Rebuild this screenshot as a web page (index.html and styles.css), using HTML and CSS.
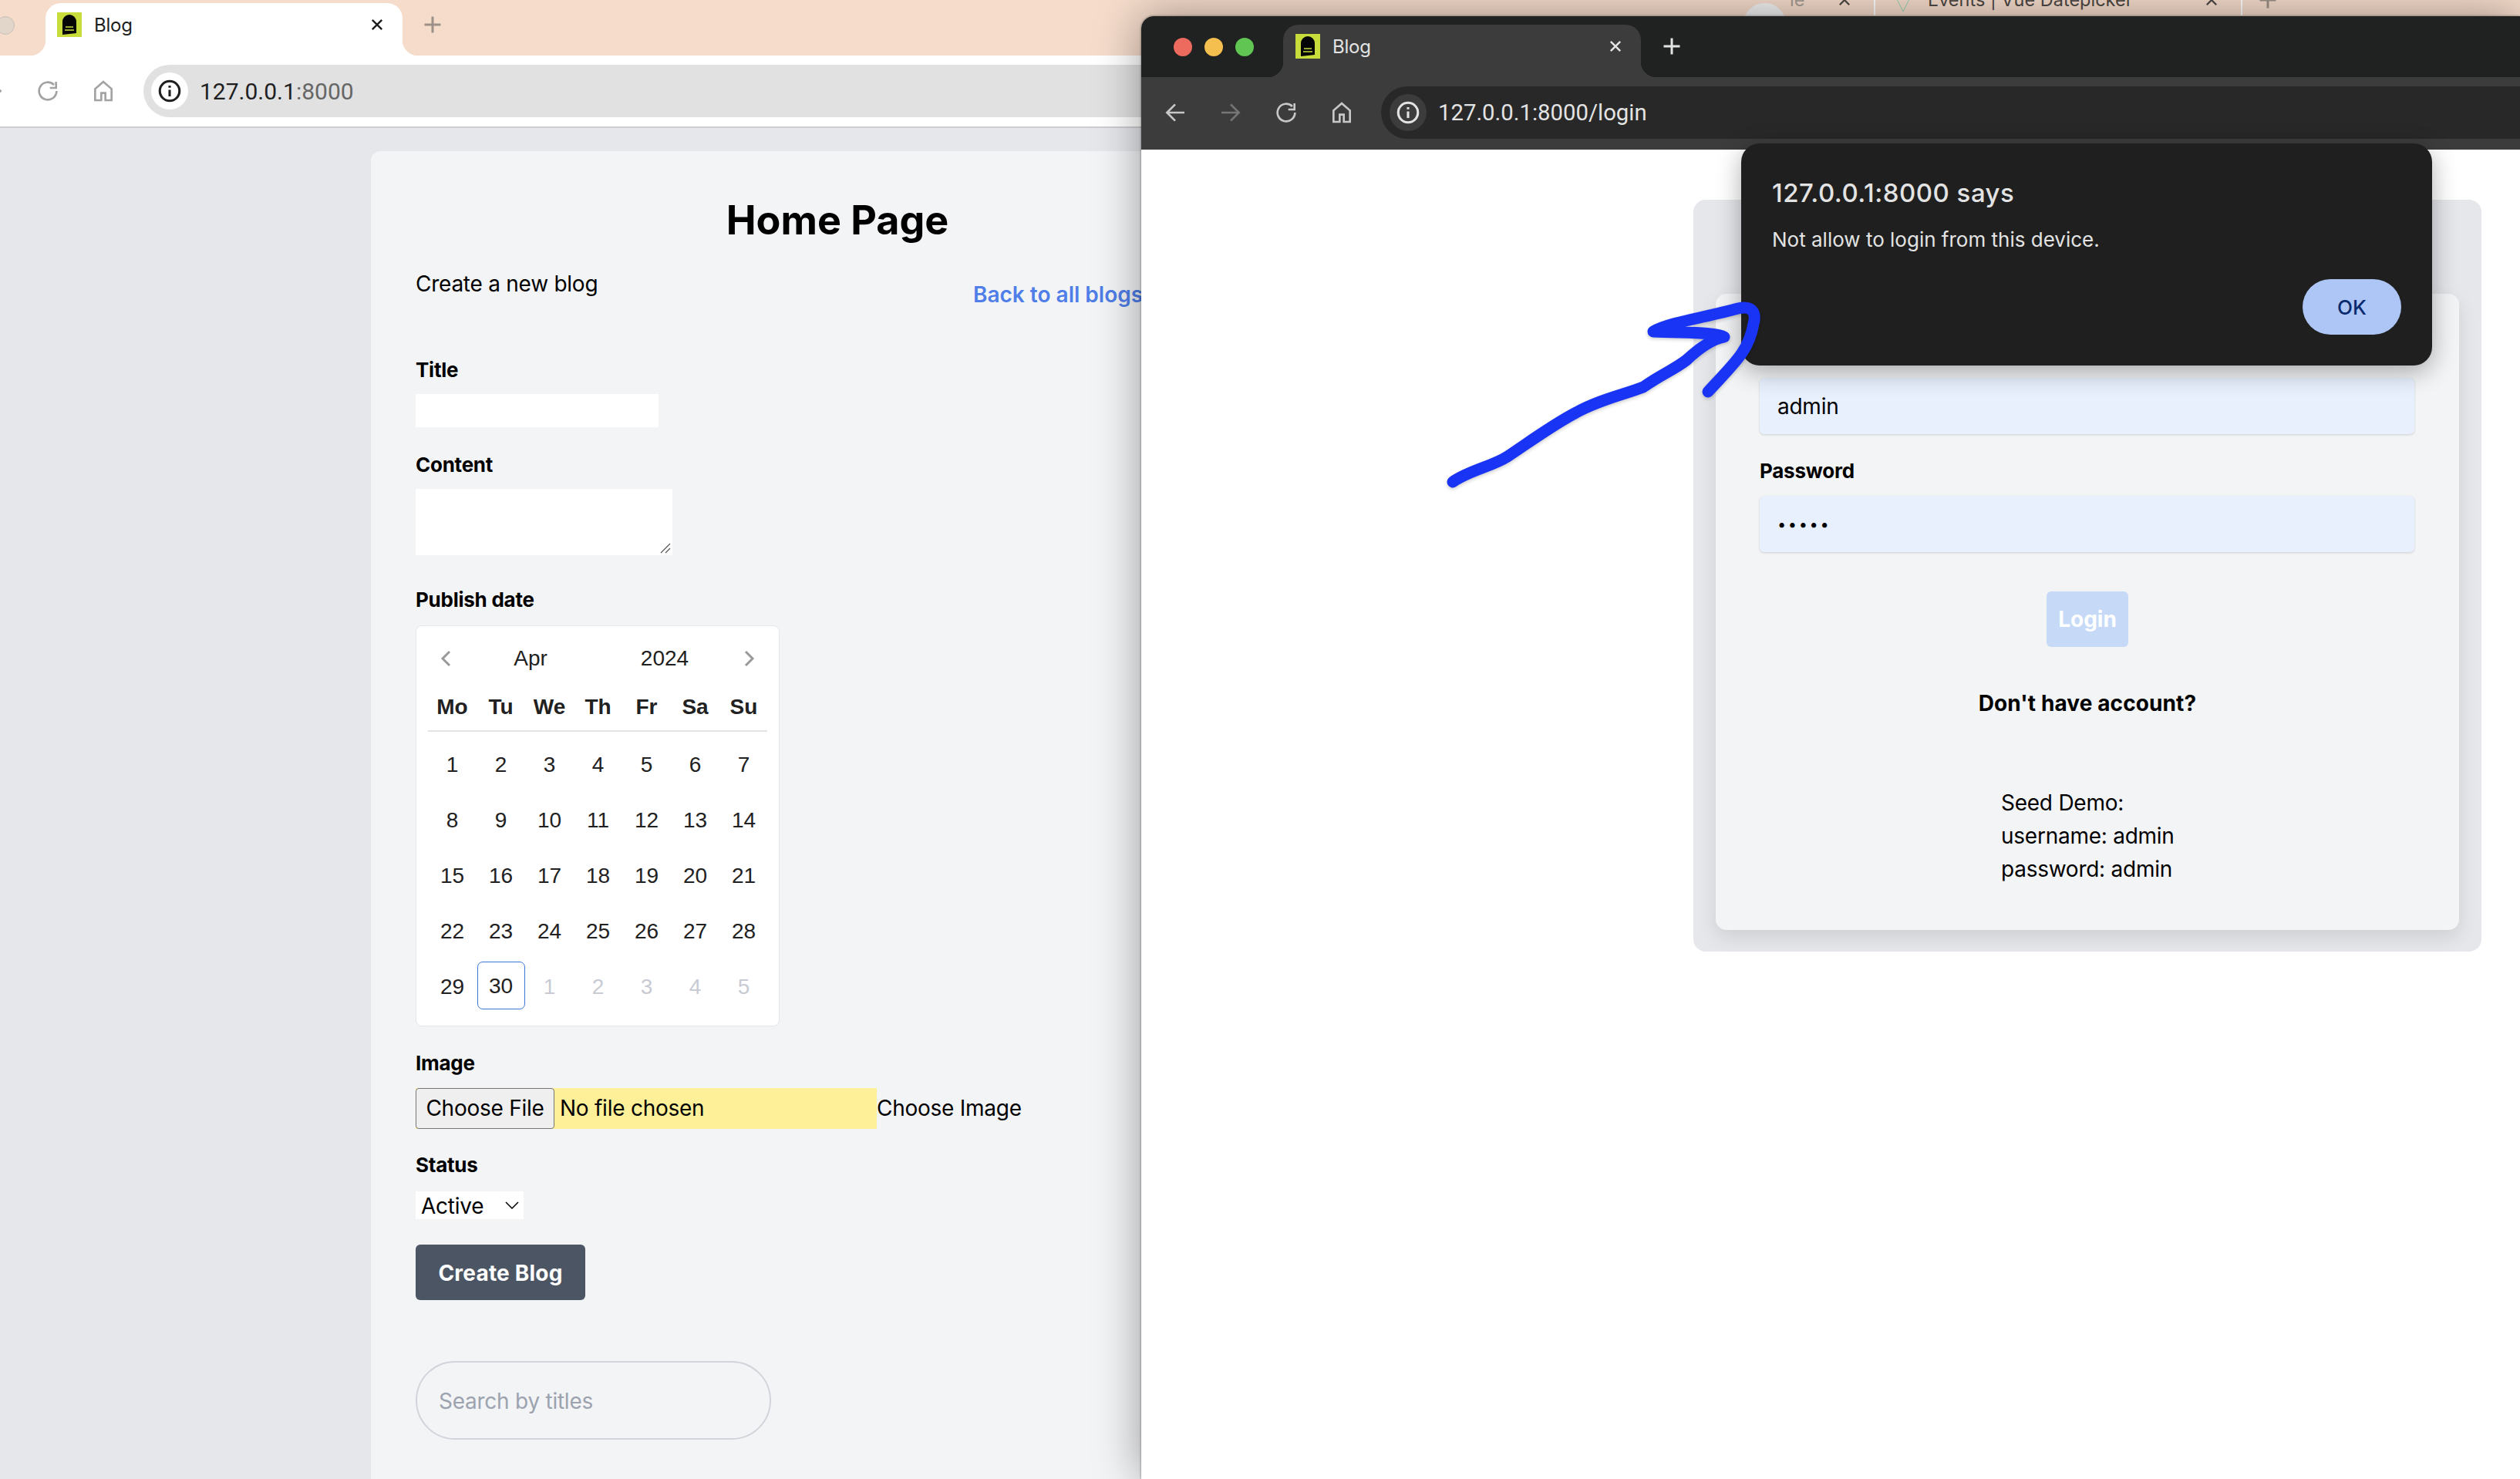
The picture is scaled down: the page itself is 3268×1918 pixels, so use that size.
FILE: index.html
```html
<!DOCTYPE html>
<html lang="en">
<head>
    <meta charset="UTF-8">
    <title>Blog</title>
    <link rel="stylesheet" href="styles.css">
</head>
<body>
    <svg class="sprite" width="0" height="0">
        <symbol id="i-back" viewBox="0 0 24 24"><path d="M21 12H4M12 4l-8 8 8 8"/></symbol>
        <symbol id="i-forward" viewBox="0 0 24 24"><path d="M3 12h17M12 4l8 8-8 8"/></symbol>
        <symbol id="i-reload" viewBox="0 0 24 24"><path d="M20.500 12a8.500 8.500 0 1 1-2.500-6"/><path d="M20 3v6h-6"/></symbol>
        <symbol id="i-home" viewBox="0 0 24 24"><path d="M12 3 4 10v11h6v-7h4v7h6V10z"/></symbol>
        <symbol id="i-info" viewBox="0 0 24 24"><circle cx="12" cy="12" r="9"/><path d="M12 11v6M12 7v2"/></symbol>
        <symbol id="i-close" viewBox="0 0 16 16"><path d="M2.500 2.500l11 11M13.500 2.500l-11 11"/></symbol>
        <symbol id="i-plus" viewBox="0 0 16 16"><path d="M8 1v14M1 8h14"/></symbol>
        <symbol id="i-prev" viewBox="0 0 16 24"><path d="M13 3 4 12l9 9"/></symbol>
        <symbol id="i-next" viewBox="0 0 16 24"><path d="M3 3l9 9-9 9"/></symbol>
        <symbol id="i-favicon" viewBox="0 0 32 32">
            <rect width="32" height="32" fill="#c8dc3c" stroke="none"/>
            <path d="M7 29V12a9 9 0 0 1 18 0v15z" fill="#050505" stroke="none"/>
            <path d="M11 19h10M10 23h12" stroke="#c8dc3c" stroke-width="1.500" fill="none"/>
        </symbol>
    </svg>

    <!-- window far behind, only the tab strip peeks out -->
    <div class="peek-strip">
        <span class="peek-avatar"></span>
        <span class="peek-title peek-title-faded">ie</span>
        <svg class="peek-close"><use href="#i-close"/></svg>
        <span class="peek-sep"></span>
        <svg class="peek-vue" viewBox="0 0 24 24"><path d="M1 1l11 22L23 1" stroke="#8fd3b0"/><path d="M8 1l4 7 4-7" stroke="#b48ad8"/></svg>
        <span class="peek-title">Events | Vue Datepicker</span>
        <svg class="peek-close"><use href="#i-close"/></svg>
        <span class="peek-sep"></span>
        <svg class="peek-plus"><use href="#i-plus"/></svg>
    </div>

    <div class="window window-back">
        <div class="tabstrip">
            <span class="dot-idle"></span>
            <div class="tab">
                <svg class="favicon"><use href="#i-favicon"/></svg>
                <span class="tab-title">Blog</span>
                <svg class="tab-close"><use href="#i-close"/></svg>
            </div>
            <svg class="tab-new"><use href="#i-plus"/></svg>
        </div>
        <div class="toolbar">
            <span class="nav-btn nav-clipped"><svg><use href="#i-forward"/></svg></span>
            <span class="nav-btn"><svg><use href="#i-reload"/></svg></span>
            <span class="nav-btn"><svg><use href="#i-home"/></svg></span>
            <div class="omnibox">
                <span class="site-info"><svg><use href="#i-info"/></svg></span>
                <span class="url">127.0.0.1<span class="url-port">:8000</span></span>
            </div>
        </div>

        <div class="page">
            <main class="card">
                <h1>Home Page</h1>
                <div class="card-head">
                    <p class="card-sub">Create a new blog</p>
                    <a class="back-link" href="#">Back to all blogs</a>
                </div>

                <form class="blog-form">
                    <div class="field field-title">
                        <label for="title">Title</label>
                        <input class="plain-input" type="text" id="title">
                    </div>
                    <div class="field field-content">
                        <label for="content">Content</label>
                        <div class="area-wrap">
                            <textarea class="plain-area" id="content"></textarea>
                            <svg class="area-grip" viewBox="0 0 14 14"><path d="M1 13 13 1M7 13l6-6"/></svg>
                        </div>
                    </div>
                    <div class="field field-date">
                        <label>Publish date</label>
                        <div class="calendar">
                            <div class="cal-head">
                                <svg class="cal-arrow"><use href="#i-prev"/></svg>
                                <span class="cal-part">Apr</span>
                                <span class="cal-part">2024</span>
                                <svg class="cal-arrow"><use href="#i-next"/></svg>
                            </div>
                            <div class="cal-grid cal-weekdays">
                                <span>Mo</span><span>Tu</span><span>We</span><span>Th</span><span>Fr</span><span>Sa</span><span>Su</span>
                            </div>
                            <div class="cal-grid cal-days">
                                <span>1</span><span>2</span><span>3</span><span>4</span><span>5</span><span>6</span><span>7</span>
                                <span>8</span><span>9</span><span>10</span><span>11</span><span>12</span><span>13</span><span>14</span>
                                <span>15</span><span>16</span><span>17</span><span>18</span><span>19</span><span>20</span><span>21</span>
                                <span>22</span><span>23</span><span>24</span><span>25</span><span>26</span><span>27</span><span>28</span>
                                <span>29</span><span><b class="cal-today">30</b></span>
                                <span class="cal-off">1</span><span class="cal-off">2</span><span class="cal-off">3</span><span class="cal-off">4</span><span class="cal-off">5</span>
                            </div>
                        </div>
                    </div>
                    <div class="field">
                        <label>Image</label>
                        <div class="file-row">
                            <div class="file-picker">
                                <span class="file-btn">Choose File</span>
                                <span class="file-name">No file chosen</span>
                            </div>
                            <span class="file-hint">Choose Image</span>
                        </div>
                    </div>
                    <div class="field field-status">
                        <label for="status">Status</label>
                        <div class="select-wrap">
                            <select class="status-select" id="status"><option>Active</option></select>
                            <svg class="select-arrow" viewBox="0 0 18 10"><path d="M1 1l8 8 8-8"/></svg>
                        </div>
                    </div>
                    <button class="create-btn" type="button">Create Blog</button>
                    <input class="search-input" type="text" placeholder="Search by titles">
                </form>
            </main>
        </div>
    </div>

    <div class="window window-front">
        <div class="titlebar">
            <div class="lights">
                <span class="light light-red"></span>
                <span class="light light-yellow"></span>
                <span class="light light-green"></span>
            </div>
            <div class="tab tab-dark">
                <svg class="favicon"><use href="#i-favicon"/></svg>
                <span class="tab-title">Blog</span>
                <svg class="tab-close"><use href="#i-close"/></svg>
            </div>
            <svg class="tab-new tab-new-dark"><use href="#i-plus"/></svg>
        </div>
        <div class="toolbar toolbar-dark">
            <span class="nav-btn"><svg><use href="#i-back"/></svg></span>
            <span class="nav-btn nav-off"><svg><use href="#i-forward"/></svg></span>
            <span class="nav-btn"><svg><use href="#i-reload"/></svg></span>
            <span class="nav-btn"><svg><use href="#i-home"/></svg></span>
            <div class="omnibox">
                <span class="site-info"><svg><use href="#i-info"/></svg></span>
                <span class="url">127.0.0.1:8000/login</span>
            </div>
        </div>

        <div class="login-page">
            <div class="login-outer">
                <form class="login-card">
                    <label for="username">Username</label>
                    <input class="login-input" type="text" id="username" value="admin">
                    <label class="login-label-pass" for="password">Password</label>
                    <input class="login-input login-pass" type="password" id="password" value="admin">
                    <button class="login-btn" type="button">Login</button>
                    <p class="login-signup">Don't have account?</p>
                    <div class="login-seed">
                        <div>Seed Demo:</div>
                        <div>username: admin</div>
                        <div>password: admin</div>
                    </div>
                </form>
            </div>
        </div>

        <div class="alert">
            <div class="alert-title">127.0.0.1:8000 says</div>
            <div class="alert-text">Not allow to login from this device.</div>
            <button class="alert-ok" type="button">OK</button>
        </div>
    </div>

    <!-- hand drawn annotation on top of the screenshot -->
    <svg class="scribble" viewBox="0 0 3268 1918">
        <path d="M1884 625C1905 610 1935 605 1955 592C1985 572 2015 550 2044 535C2075 518 2105 512 2131 502C2155 485 2170 480 2187 467C2205 450 2220 440 2236 437C2225 430 2180 432 2144 430C2165 418 2210 412 2254 400C2272 396 2278 405 2274 420C2268 455 2250 470 2215 508"/>
    </svg>
</body>
</html>
```

FILE: styles.css
```css
* {
    box-sizing: border-box;
}
html, body {
    margin: 0;
    height: 100%;
}
body {
    position: relative;
    width: 3268px;
    height: 1918px;
    overflow: hidden;
    background-color: #f5dccb;
    font-family: Inter, 'Noto Sans', sans-serif;
    font-size: 28px;
    letter-spacing: -0.25px;
    color: #000;
}
.sprite {
    position: absolute;
}
svg {
    fill: none;
    stroke: currentColor;
    stroke-width: 2;
}

/* windows */
.window {
    position: absolute;
    display: flex;
    flex-direction: column;
}
.window-back {
    left: 0;
    top: 0;
    width: 1600px;
    height: 1918px;
}
.window-front {
    left: 1480px;
    top: 21px;
    width: 1788px;
    height: 1897px;
    background-color: #fff;
    border-radius: 16px 0 0 0;
    box-shadow: 0 0 60px rgba(0, 0, 0, 0.38), 0 0 3px rgba(0, 0, 0, 0.5);
}

/* tabs */
.tabstrip {
    display: flex;
    align-items: flex-end;
    height: 72px;
    flex: none;
}
.dot-idle {
    width: 24px;
    height: 24px;
    margin: 0 40px 27px -5px;
    border-radius: 50%;
    background-color: #e2d6cb;
    border: 1px solid #c9bfb5;
}
.tab {
    position: relative;
    display: flex;
    align-items: center;
    width: 463px;
    height: 68px;
    padding: 0 24px 12px 15px;
    background-color: #fff;
    border-radius: 20px 20px 0 0;
    color: #1f1f1f;
}
.tab::before, .tab::after {
    content: '';
    position: absolute;
    bottom: 0;
    width: 20px;
    height: 20px;
}
.tab::before {
    left: -20px;
    background: radial-gradient(circle at 0 0, transparent 20px, #fff 20.500px);
}
.tab::after {
    right: -20px;
    background: radial-gradient(circle at 100% 0, transparent 20px, #fff 20.500px);
}
.favicon {
    width: 32px;
    height: 32px;
    flex: none;
}
.tab-title {
    flex: 1;
    margin-left: 16px;
    font-size: 24px;
}
.tab-close {
    width: 18px;
    height: 18px;
    stroke-width: 2.200;
}
.tab-new {
    width: 24px;
    height: 24px;
    margin: 0 0 28px 27px;
    color: #9c9087;
}

/* toolbars */
.toolbar {
    display: flex;
    align-items: center;
    flex: none;
    height: 94px;
    padding-left: 26px;
    background-color: #fff;
    border-bottom: 2px solid #cdcdcd;
    color: #a3a3a3;
}
.nav-btn {
    display: flex;
    align-items: center;
    justify-content: center;
    width: 72px;
    height: 68px;
    flex: none;
}
.nav-btn svg {
    width: 32px;
    height: 32px;
}
.nav-clipped {
    margin-left: -72px;
}
.omnibox {
    display: flex;
    align-items: center;
    flex: 1;
    height: 68px;
    margin-left: 16px;
    padding-left: 10px;
    background-color: #e1e1e1;
    border-radius: 34px 0 0 34px;
}
.site-info {
    display: flex;
    align-items: center;
    justify-content: center;
    width: 48px;
    height: 48px;
    border-radius: 50%;
    background-color: #fff;
    color: #1f1f1f;
}
.site-info svg {
    width: 34px;
    height: 34px;
    stroke-width: 2.200;
}
.url {
    margin-left: 15px;
    font-family: Roboto, sans-serif;
    font-size: 30px;
    letter-spacing: 0;
    color: #1f1f1f;
}
.url-port {
    color: #666;
}

/* front window chrome */
.titlebar {
    display: flex;
    align-items: flex-end;
    flex: none;
    height: 79px;
    background-color: #202222;
    border-radius: 16px 0 0 0;
}
.lights {
    display: flex;
    gap: 16px;
    margin: 0 38px 27px 42px;
}
.light {
    width: 24px;
    height: 24px;
    border-radius: 50%;
}
.light-red {
    background-color: #ed6a5e;
}
.light-yellow {
    background-color: #f4bf4f;
}
.light-green {
    background-color: #61c554;
}
.tab-dark {
    width: 464px;
    padding-left: 16px;
    background-color: #3c3c3c;
    color: #e3e3e3;
}
.tab-dark::before {
    background: radial-gradient(circle at 0 0, transparent 20px, #3c3c3c 20.500px);
}
.tab-dark::after {
    background: radial-gradient(circle at 100% 0, transparent 20px, #3c3c3c 20.500px);
}
.tab-new-dark {
    margin-left: 28px;
    color: #e3e3e3;
}
.toolbar-dark {
    height: 94px;
    padding: 0 0 2px 8px;
    background-color: #3c3c3c;
    border-bottom: 0;
    color: #c7c7c7;
}
.toolbar-dark .omnibox {
    margin-left: 15px;
    padding-left: 11px;
    background-color: #282828;
}
.toolbar-dark .site-info {
    background-color: #3c3c3c;
    color: #e3e3e3;
}
.toolbar-dark .url {
    font-size: 29.300px;
    color: #e3e3e3;
}
.nav-off {
    color: #757575;
}

/* blog page */
.page {
    flex: 1;
    padding: 30px 0 0 481px;
    background-color: #e5e7eb;
}
.card {
    width: 1210px;
    height: 1760px;
    padding: 58px 58px 0;
    background-color: #f3f4f6;
    border-radius: 12px 12px 0 0;
}
h1 {
    margin: 0;
    font-size: 52px;
    line-height: 64px;
    font-weight: 700;
    letter-spacing: 0;
    text-align: center;
}
.card-head {
    display: grid;
    grid-template-columns: 723px auto;
    margin-top: 30px;
    line-height: 40px;
}
.card-sub {
    margin: 0;
}
.back-link {
    margin-top: 14px;
    font-weight: 600;
    letter-spacing: 0;
    color: #4f7ee8;
    text-decoration: none;
    white-space: nowrap;
}
.blog-form {
    display: flex;
    flex-direction: column;
    align-items: flex-start;
}
.field {
    margin-top: 29px;
}
.field-title {
    margin-top: 59px;
}
.field-content {
    margin-top: 30px;
}
.field-date {
    margin-top: 39px;
}
.field label {
    display: block;
    margin-bottom: 13px;
    padding-top: 1px;
    font-size: 26px;
    line-height: 36px;
    font-weight: 700;
}
.login-card label {
    display: block;
    margin-bottom: 14px;
    font-size: 26px;
    line-height: 36px;
    font-weight: 700;
}
.plain-input {
    display: block;
    width: 315px;
    height: 43px;
    border: 0;
    background-color: #fff;
}
.area-wrap {
    position: relative;
    width: 333px;
    height: 86px;
}
.plain-area {
    display: block;
    width: 333px;
    height: 86px;
    border: 0;
    background-color: #fff;
    resize: none;
}
.area-grip {
    position: absolute;
    right: 2px;
    bottom: 2px;
    width: 14px;
    height: 14px;
    stroke-width: 1.200;
    color: #555;
}

/* date picker */
.field-date label {
    margin-bottom: 15px;
}
.calendar {
    width: 472px;
    height: 520px;
    padding: 23px 15px 0;
    background-color: #fff;
    border: 1px solid #e5e7eb;
    border-radius: 8px;
    font-family: 'Liberation Sans', Arial, sans-serif;
    letter-spacing: 0;
    color: #212121;
}
.cal-head {
    display: flex;
    align-items: center;
    height: 38px;
}
.cal-arrow {
    width: 46px;
    height: 24px;
    flex: none;
    stroke-width: 3;
    color: #9a9a9a;
}
.cal-part {
    width: 175px;
    text-align: center;
}
.cal-grid {
    display: grid;
    grid-template-columns: repeat(7, 63px);
    text-align: center;
}
.cal-weekdays {
    height: 65px;
    margin-top: 11px;
    padding-bottom: 2px;
    border-bottom: 2px solid #e3e3e3;
    font-weight: 700;
    line-height: 65px;
}
.cal-days {
    grid-auto-rows: 72px;
    margin-top: 5px;
    line-height: 75px;
}
.cal-off {
    color: #c8cbd3;
}
.cal-today {
    display: inline-block;
    width: 62px;
    height: 62px;
    margin-top: 5px;
    border: 1.500px solid #3b76d8;
    border-radius: 7px;
    font-weight: 400;
    line-height: 61px;
    vertical-align: top;
}

/* file + select */
.file-row {
    display: flex;
    align-items: center;
    line-height: 55px;
}
.file-picker {
    display: flex;
    align-items: center;
    width: 598px;
    height: 53px;
    background-color: #fdf098;
}
.file-btn {
    display: flex;
    align-items: center;
    justify-content: center;
    width: 180px;
    height: 53px;
    background-color: #efefef;
    border: 1px solid #767676;
    border-radius: 4px;
}
.file-name {
    margin-left: 7px;
}
.field-status {
    margin-top: 27px;
}
.field-status label {
    margin-bottom: 16px;
}
.select-wrap {
    position: relative;
    width: 140px;
    height: 36px;
}
.status-select {
    display: block;
    width: 140px;
    height: 36px;
    padding: 1px 0 0 7px;
    border: 0;
    appearance: none;
    background-color: #fff;
    font-family: inherit;
    font-size: 28px;
    letter-spacing: -0.25px;
    color: #000;
}
.select-arrow {
    position: absolute;
    right: 6px;
    top: 13px;
    width: 18px;
    height: 10px;
    stroke-width: 1.500;
}
.create-btn {
    width: 220px;
    height: 72px;
    margin-top: 33px;
    padding-top: 2px;
    border: 0;
    border-radius: 6px;
    background-color: #4b5563;
    color: #fff;
    font-family: inherit;
    font-size: 28px;
    font-weight: 700;
    letter-spacing: 0.2px;
}
.search-input {
    width: 461px;
    height: 102px;
    margin-top: 79px;
    padding: 2px 28px 0;
    border: 2px solid #d1d5db;
    border-radius: 51px;
    background: transparent;
    font-family: inherit;
    font-size: 28px;
    letter-spacing: -0.25px;
}
.search-input::placeholder {
    color: #9ca3af;
}

/* login page */
.login-page {
    flex: 1;
    padding: 65px 0 0 716px;
    background-color: #fff;
}
.login-outer {
    width: 1022px;
    height: 975px;
    padding: 122px 0 0 29px;
    background-color: #e5e7eb;
    border-radius: 16px;
}
.login-card {
    display: flex;
    flex-direction: column;
    align-items: flex-start;
    width: 964px;
    height: 825px;
    padding: 59px 57px 0;
    background-color: #f3f4f6;
    border-radius: 14px;
    box-shadow: 0 10px 24px rgba(0, 0, 0, 0.1);
}
.login-input {
    width: 849px;
    height: 73px;
    padding: 0 23px;
    border: 0;
    border-radius: 6px;
    background-color: #e8f0fe;
    box-shadow: 0 1px 3px rgba(0, 0, 0, 0.16);
    font-family: inherit;
    font-size: 28px;
    letter-spacing: -0.25px;
}
.login-pass {
    font-size: 20px;
    letter-spacing: 2.600px;
}
.login-card .login-label-pass {
    margin-top: 30px;
}
.login-btn {
    align-self: center;
    width: 106px;
    height: 72px;
    margin-top: 51px;
    border: 0;
    border-radius: 6px;
    background-color: #c6daf8;
    color: #fff;
    font-family: inherit;
    font-size: 28px;
    font-weight: 700;
    letter-spacing: 0;
}
.login-signup {
    align-self: center;
    margin: 53px 0 0;
    line-height: 40px;
    font-weight: 700;
    letter-spacing: 0.1px;
}
.login-seed {
    margin: 88px 0 0 313px;
    line-height: 43px;
}

/* js alert */
.alert {
    position: absolute;
    left: 778px;
    top: 165px;
    display: flex;
    flex-direction: column;
    width: 896px;
    height: 288px;
    padding: 44px 40px 40px 40px;
    background-color: #1f1f1f;
    border-radius: 24px;
    box-shadow: 0 8px 32px rgba(0, 0, 0, 0.32);
    color: #e3e3e3;
}
.alert-title {
    font-size: 33px;
    line-height: 40px;
    font-weight: 500;
    letter-spacing: 0.5px;
}
.alert-text {
    margin-top: 24px;
    font-size: 26px;
    line-height: 34px;
    letter-spacing: 0;
}
.alert-ok {
    align-self: flex-end;
    width: 128px;
    height: 72px;
    margin-top: auto;
    border: 0;
    border-radius: 36px;
    background-color: #aec6f6;
    color: #0a2a6e;
    font-family: inherit;
    font-size: 26px;
    font-weight: 500;
}

/* third window behind */
.peek-strip {
    position: absolute;
    left: 2261px;
    top: 0;
    display: flex;
    width: 1007px;
    height: 24px;
    overflow: hidden;
    color: #4d4844;
}
.peek-avatar {
    position: absolute;
    left: 0;
    top: 4px;
    width: 55px;
    height: 40px;
    border-radius: 27px 27px 0 0;
    background-color: #f2f2f2;
}
.peek-title {
    position: absolute;
    left: 239px;
    top: -15px;
    font-size: 23.500px;
    letter-spacing: 0;
    white-space: nowrap;
}
.peek-title-faded {
    left: 60px;
    color: #a89c94;
}
.peek-close {
    position: absolute;
    left: 122px;
    top: -9px;
    width: 18px;
    height: 18px;
}
.peek-close ~ .peek-close {
    left: 598px;
}
.peek-sep {
    position: absolute;
    left: 169px;
    top: 0;
    width: 2px;
    height: 20px;
    background-color: #fff;
}
.peek-sep ~ .peek-sep {
    left: 645px;
}
.peek-vue {
    position: absolute;
    left: 195px;
    top: -8px;
    width: 24px;
    height: 24px;
    stroke-width: 1;
}
.peek-plus {
    position: absolute;
    left: 668px;
    top: -12px;
    width: 24px;
    height: 24px;
    color: #9c9087;
}

/* annotation */
.scribble {
    position: absolute;
    left: 0;
    top: 0;
    width: 3268px;
    height: 1918px;
    pointer-events: none;
    stroke: #1a34f5;
    stroke-width: 15;
    stroke-linecap: round;
    stroke-linejoin: round;
    filter: drop-shadow(0 2px 2px rgba(0, 0, 0, 0.2));
}
```
